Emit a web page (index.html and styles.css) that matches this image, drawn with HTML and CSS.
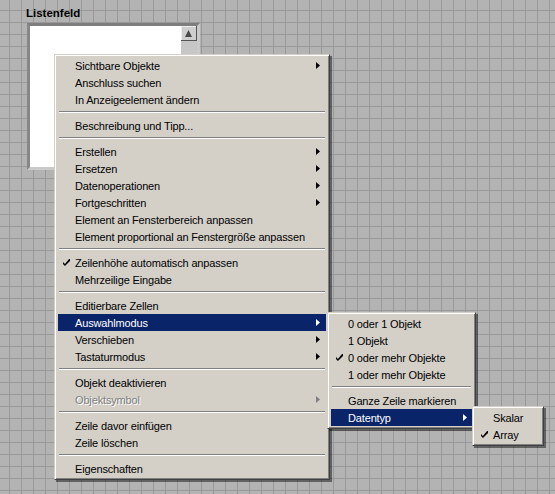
FILE: index.html
```html
<!DOCTYPE html>
<html lang="de">
<head>
    <meta charset="UTF-8">
    <title>Listenfeld - Kontextmenü</title>
    <link rel="stylesheet" href="styles.css">
</head>
<body>

    <!-- FRONT PANEL -->
    <div class="panel">
        <div class="label">Listenfeld</div>
        <div class="listbox">
            <div class="list-body"></div>
            <div class="scrollbar">
                <div class="scroll-btn">
                    <svg width="7" height="7" viewBox="0 0 7 7"><polygon points="3.5,0 7,7 0,7" fill="#4a4a4a"/></svg>
                </div>
            </div>
        </div>

        <!-- MAIN CONTEXT MENU -->
        <ul class="menu main-menu">
            <li class="item">Sichtbare Objekte<span class="arrow"></span></li>
            <li class="item">Anschluss suchen</li>
            <li class="item">In Anzeigeelement ändern</li>
            <li class="sep"></li>
            <li class="item">Beschreibung und Tipp...</li>
            <li class="sep"></li>
            <li class="item">Erstellen<span class="arrow"></span></li>
            <li class="item">Ersetzen<span class="arrow"></span></li>
            <li class="item">Datenoperationen<span class="arrow"></span></li>
            <li class="item">Fortgeschritten<span class="arrow"></span></li>
            <li class="item">Element an Fensterbereich anpassen</li>
            <li class="item">Element proportional an Fenstergröße anpassen</li>
            <li class="sep"></li>
            <li class="item checked">Zeilenhöhe automatisch anpassen</li>
            <li class="item">Mehrzeilige Eingabe</li>
            <li class="sep"></li>
            <li class="item">Editierbare Zellen</li>
            <li class="item active">Auswahlmodus<span class="arrow"></span></li>
            <li class="item">Verschieben<span class="arrow"></span></li>
            <li class="item">Tastaturmodus<span class="arrow"></span></li>
            <li class="sep"></li>
            <li class="item">Objekt deaktivieren</li>
            <li class="item disabled">Objektsymbol<span class="arrow"></span></li>
            <li class="sep"></li>
            <li class="item">Zeile davor einfügen</li>
            <li class="item">Zeile löschen</li>
            <li class="sep"></li>
            <li class="item">Eigenschaften</li>
        </ul>

        <!-- AUSWAHLMODUS SUBMENU -->
        <ul class="menu sub-menu">
            <li class="item">0 oder 1 Objekt</li>
            <li class="item">1 Objekt</li>
            <li class="item checked">0 oder mehr Objekte</li>
            <li class="item">1 oder mehr Objekte</li>
            <li class="sep"></li>
            <li class="item">Ganze Zeile markieren</li>
            <li class="item active">Datentyp<span class="arrow"></span></li>
        </ul>

        <!-- DATENTYP SUBMENU -->
        <ul class="menu type-menu">
            <li class="item">Skalar</li>
            <li class="item checked">Array</li>
        </ul>
    </div>

</body>
</html>
```

FILE: styles.css
```css
* { box-sizing: border-box; }
body {
    margin: 0;
    font-family: "Liberation Sans", Arial, sans-serif;
    font-size: 11px;
    color: black;
}
.panel {
    position: relative;
    width: 555px;
    height: 494px;
    padding: 6px 0 0 26px;
    overflow: hidden;
    background-color: #b3b3b3;
    background-image:
        linear-gradient(to right, #999 1px, transparent 1px),
        linear-gradient(to bottom, #999 1px, transparent 1px);
    background-size: 12px 12px;
    background-position: 9px 10px;
}
.label {
    font-weight: bold;
    font-size: 11.5px;
    line-height: 14px;
    height: 17px;
}
.listbox {
    display: flex;
    width: 173px;
    height: 147px;
    margin-left: 1px;
    border: 3px solid;
    border-color: #7e7e7e #cacaca #cacaca #868686;
}
.list-body { flex: 1; background: white; }
.scrollbar {
    width: 16px;
    background: #c6c6c6;
}
.scroll-btn {
    display: flex;
    justify-content: center;
    align-items: center;
    height: 15px;
    background: #cfcfcf;
    border-right: 1px solid #555;
    border-bottom: 1px solid #555;
    box-shadow: inset 1px 1px #eee;
}

/* popup menus */
.menu {
    position: absolute;
    margin: 0;
    padding: 2px 3px;
    list-style: none;
    background: #d4d0c8;
    border: 1px solid;
    border-color: #d4d0c8 #404040 #404040 #d4d0c8;
    box-shadow: inset 1px 1px #fff, inset -1px -1px #808080, 2px 2px 0 rgba(0, 0, 0, 0.45);
}
.main-menu { left: 54px; top: 54px; width: 276px; }
.sub-menu { left: 327px; top: 312px; width: 149px; }
.type-menu { left: 472px; top: 406px; width: 72px; }

.item {
    position: relative;
    display: flex;
    align-items: center;
    height: 17px;
    padding: 0 6px 0 17px;
    letter-spacing: -0.15px;
    white-space: nowrap;
}
.item.active { background: #0a246a; color: white; }
.item.disabled { color: #808080; text-shadow: 1px 1px 0 white; }
.sub-menu .item.active { padding-right: 5px; }

.arrow {
    margin-left: auto;
    width: 4px;
    height: 7px;
    background: black;
    clip-path: polygon(0 0, 100% 50%, 0 100%);
}
.active .arrow { background: white; }
.disabled .arrow { background: #808080; }

.checked::before {
    content: "";
    position: absolute;
    left: 5px;
    top: 5px;
    width: 7px;
    height: 7px;
    background: black;
    clip-path: polygon(0 43%, 28% 71%, 86% 0, 100% 0, 100% 28%, 28% 100%, 0 71%);
}
.active.checked::before { background: white; }

.sep {
    height: 9px;
    padding-top: 3px;
    margin: 0 1px;
}
.sep::after {
    content: "";
    display: block;
    border-top: 1px solid #808080;
    border-bottom: 1px solid white;
}
```
